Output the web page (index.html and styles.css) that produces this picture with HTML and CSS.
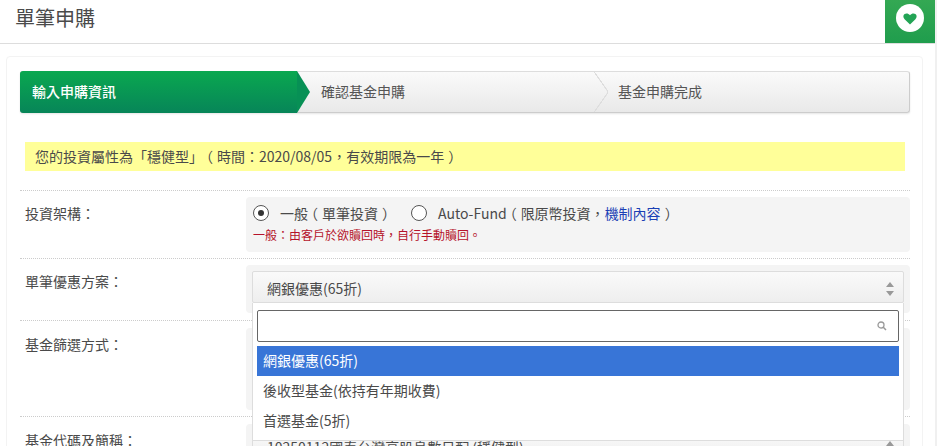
FILE: index.html
```html
<!DOCTYPE html>
<html lang="zh-Hant">
<head>
<meta charset="utf-8">
<title>單筆申購</title>
<link rel="stylesheet" href="styles.css">
</head>
<body>
<header class="topbar">
  <h1 class="title">單筆申購</h1>
  <a class="fav"><svg width="28" height="28" viewBox="0 0 28 28"><circle cx="14" cy="14" r="14" fill="#fff"/><path d="M14 20.5 8.6 15.2c-1.7-1.7-1.6-4.1 0-5.2 1.7-1.1 3.9-.6 5.4 1.2 1.5-1.8 3.700-2.300 5.400-1.200 1.600 1.100 1.700 3.500 0 5.200z" fill="#23a455"/></svg></a>
</header>
<main class="card">
  <div class="steps">
    <div class="step active">輸入申購資訊</div>
    <div class="step second">確認基金申購</div>
    <div class="step third">基金申購完成</div>
  </div>
  <p class="notice">您的投資屬性為「穩健型」<span class="po">（</span>時間：2020/08/05，有效期限為一年<span class="pc">）</span></p>
  <section class="row r1">
    <div class="label">投資架構：</div>
    <div class="field f1">
      <div class="radios">
        <label class="radio"><span class="dot on"></span><span>一般<span class="po">（</span>單筆投資<span class="pc">）</span></span></label>
        <label class="radio"><span class="dot"></span><span>Auto-Fund<span class="po">（</span>限原幣投資，<a class="link">機制內容</a><span class="pc">）</span></span></label>
      </div>
      <div class="hint">一般：由客戶於欲贖回時，自行手動贖回。</div>
    </div>
  </section>
  <section class="row r2">
    <div class="label">單筆優惠方案：</div>
    <div class="field f2">
      <div class="select">網銀優惠(65折)<svg class="updown" width="8" height="14" viewBox="0 0 8 14"><path d="M4 0 8 5H0z M4 14 0 9h8z" fill="#999"/></svg></div>
      <div class="dropdown">
        <div class="search"><svg width="10" height="10" viewBox="0 0 10 10"><circle cx="4" cy="4" r="3" fill="none" stroke="#999" stroke-width="1.300"/><path d="M6.300 6.300 9 9" stroke="#999" stroke-width="1.500"/></svg></div>
        <div class="opt sel">網銀優惠(65折)</div>
        <div class="opt">後收型基金(依持有年期收費)</div>
        <div class="opt">首選基金(5折)</div>
      </div>
    </div>
  </section>
  <section class="row r3">
    <div class="label">基金篩選方式：</div>
    <div class="field f3"></div>
  </section>
  <section class="row r4">
    <div class="label">基金代碼及簡稱：</div>
    <div class="field f4">
      <div class="select">10250112國泰台灣高股息數日配 (穩健型)<svg class="updown" width="8" height="14" viewBox="0 0 8 14"><path d="M4 0 8 5H0z M4 14 0 9h8z" fill="#999"/></svg></div>
    </div>
  </section>
</main>
</body>
</html>
```
FILE: styles.css
```css
* { box-sizing: border-box; }
html, body { margin: 0; height: 446px; overflow: hidden; background: #fff; }
body { font-family: "Noto Sans CJK TC", "Open Sans", sans-serif; font-size: 14px; color: #4a4a4a; position: relative; border-right: 2px solid #f0f0f0; text-spacing-trim: space-all; }
.topbar { height: 44px; border-bottom: 1px solid #ddd; display: flex; justify-content: space-between; }
.title { margin: 0 0 0 15px; font-size: 20px; font-weight: 400; line-height: 36px; color: #4a4a4a; }
.fav { width: 50px; height: 43px; background: linear-gradient(#34a853, #1f9d4d); display: flex; justify-content: center; padding-top: 4px; }
.card { margin: 12px 12px 0 6px; padding: 14px 12px 0 13px; border: 1px solid #f3f3f3; border-radius: 4px; height: 400px; }
.steps { display: flex; height: 42px; background: linear-gradient(#fafafa, #e9e9e9); border: 1px solid #ccc; border-top-color: #ddd; border-radius: 3px; box-shadow: 0 1px 2px #e5e5e5; line-height: 38px; color: #555; }
.step { position: relative; padding-left: 12px; }
.step.active { flex: 0 0 277px; margin: -1px 0 -1px -1px; line-height: 40px; border-radius: 3px 0 0 3px; background: linear-gradient(#0aa850, #078558); color: #fff; font-weight: 500; }
.step.active::after { content: ""; position: absolute; left: 100%; top: 0; border-style: solid; border-width: 21px 0 21px 13px; border-color: transparent transparent transparent #079055; }
.step.second { flex: 0 0 297px; padding-left: 24px; }
.step.third { flex: 1; padding-left: 24px; }
.step.second::after { content: ""; position: absolute; right: -14px; top: 0; width: 14px; height: 40px; background: linear-gradient(to top right, transparent 48%, #ddd 49%, #ddd 53%, transparent 54%) top/100% 50% no-repeat, linear-gradient(to bottom right, transparent 48%, #ddd 49%, #ddd 53%, transparent 54%) bottom/100% 50% no-repeat; }
.notice { margin: 29px 5px 0 5px; height: 29px; padding-left: 10px; line-height: 29px; background: #ffff99; color: #4a4a4a; }
.po { margin-left: -4px; margin-right: 4px; }
.pc { margin-left: 4px; margin-right: -4px; }
.row { display: flex; border-top: 1px dotted #ccc; margin-top: 19px; padding-top: 6px; }
.row + .row { margin-top: 6px; }
.row.r3 { margin-top: 7px; }
.label { flex: 0 0 226px; padding: 4px 0 0 5px; line-height: 24px; color: #4a4a4a; }
.field { flex: 1; background: #f4f4f4; border-radius: 4px; position: relative; }
.f1 { height: 55px; padding: 4px 7px; }
.f2 { height: 48px; padding: 6px 6px 0; }
.f3 { height: 82px; }
.f4 { height: 60px; padding: 6px 6px 0; }
.r3, .r4 { padding-top: 7px; }
.radios { display: flex; line-height: 24px; gap: 19px; }
.radio { display: flex; align-items: center; color: #4a4a4a; white-space: nowrap; }
.dot { width: 16px; height: 16px; border: 1px solid #555; border-radius: 50%; background: #fff; margin-right: 11px; display: flex; align-items: center; justify-content: center; }
.dot.on::before { content: ""; width: 6px; height: 6px; border-radius: 50%; background: #333; }
.link { color: #1a3fb5; }
.hint { color: #b5122b; font-size: 12px; line-height: 18px; margin-top: 1px; }
.select { height: 32px; border: 1px solid #ddd; border-radius: 2px; background: linear-gradient(#fafafa, #eee); line-height: 32px; padding-left: 14px; position: relative; color: #4a4a4a; }
.updown { position: absolute; right: 9px; top: 10px; }
.dropdown { position: absolute; left: 6px; top: 38px; width: 652px; height: 138px; background: #fff; border: 1px solid #ddd; border-top: 0; padding: 7px 4px 0; z-index: 2; }
.search { height: 32px; border: 1px solid #666; border-radius: 2px; margin-bottom: 4px; display: flex; align-items: center; justify-content: flex-end; padding-right: 11px; }
.opt { height: 30px; line-height: 28px; padding-left: 6px; color: #4a4a4a; }
.opt.sel { background: #3875d7; color: #fff; }
```
